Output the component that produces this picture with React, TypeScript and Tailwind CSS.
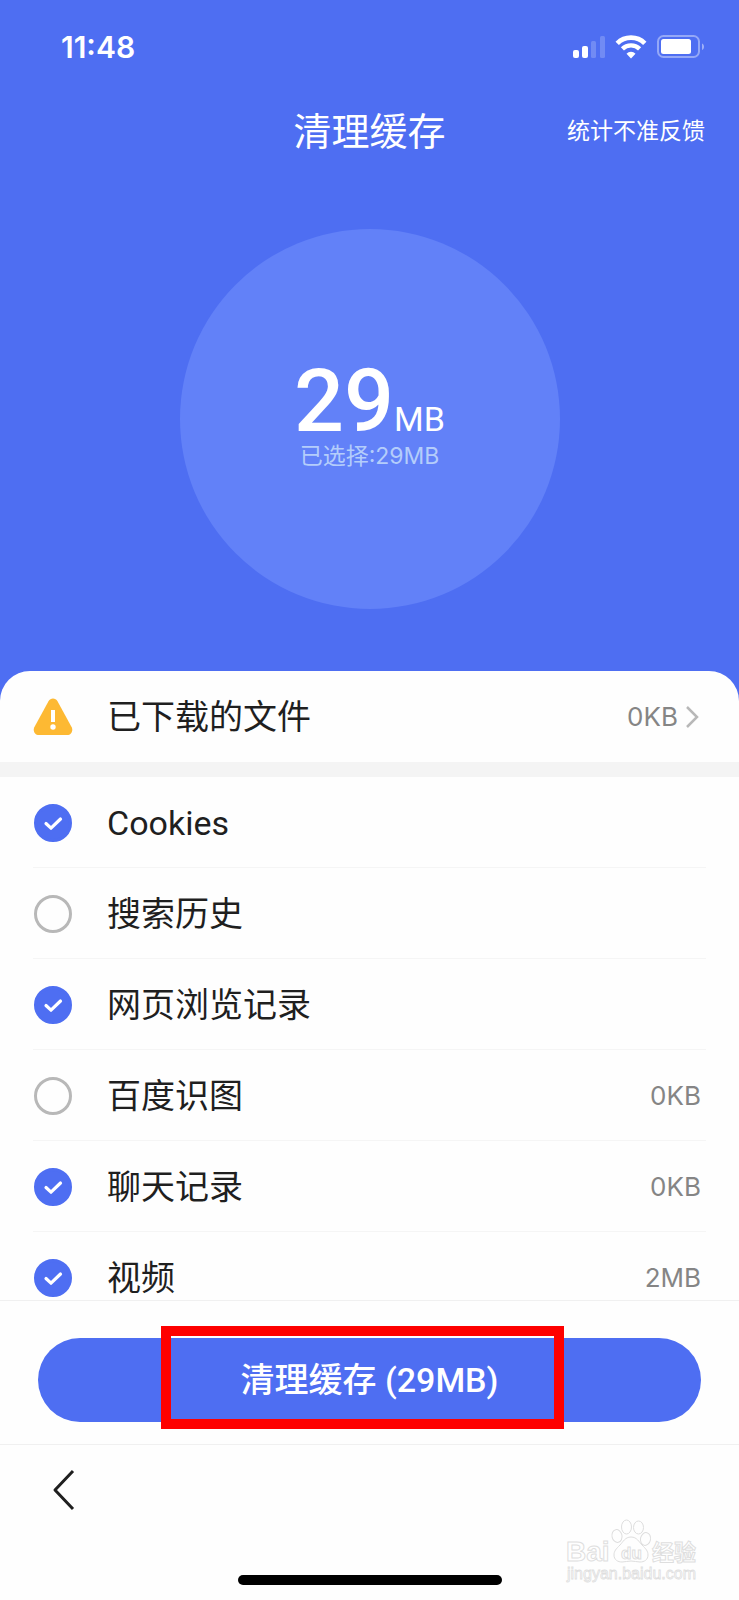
import { useState } from "react";

const initialItems = [
  { id: "cookies", label: "Cookies", size: "", checked: true },
  { id: "search", label: "搜索历史", size: "", checked: false },
  { id: "browse", label: "网页浏览记录", size: "", checked: true },
  { id: "image", label: "百度识图", size: "0KB", checked: false },
  { id: "chat", label: "聊天记录", size: "0KB", checked: true },
  { id: "video", label: "视频", size: "2MB", checked: true },
];

function StatusBar() {
  return (
    <div className="flex h-[94px] items-center justify-between pl-[61px] pr-[34px]">
      <span className="text-[30px] font-semibold leading-8">11:48</span>
      <div className="flex items-center gap-[10px]">
        {/* Signal */}
        <svg width="34" height="24" viewBox="0 0 34 24" fill="#fff" aria-hidden="true">
          <rect x="2" y="15" width="6" height="8" rx="2" />
          <rect x="11" y="11" width="6" height="12" rx="2" />
          <rect x="20" y="6" width="5" height="17" rx="1.5" opacity=".2" />
          <rect x="29" y="1" width="5" height="22" rx="1.5" opacity=".2" />
        </svg>
        {/* Wi-Fi */}
        <svg width="32" height="24" viewBox="0 0 32 24" fill="none" stroke="#fff" aria-hidden="true">
          <path d="M2.2 8.4a19.6 19.6 0 0 1 27.6 0" strokeWidth="4.8" />
          <path d="M7.4 13.9a12.2 12.2 0 0 1 17.2 0" strokeWidth="4.4" />
          <path d="M16 23.5l-4.5-4.7a6.2 6.2 0 0 1 9 0z" fill="#fff" stroke="none" />
        </svg>
        {/* Battery */}
        <svg width="48" height="24" viewBox="0 0 48 24" aria-hidden="true">
          <rect x="1" y="1" width="41" height="21" rx="5.5" fill="none" stroke="#fff" strokeWidth="2" opacity=".4" />
          <rect x="4" y="4" width="30" height="15" rx="2.5" fill="#fff" />
          <path d="M45 8.5c2.7 1.2 2.7 5.3 0 6.5z" fill="#fff" opacity=".45" />
        </svg>
      </div>
    </div>
  );
}

function Watermark() {
  return (
    <svg
      className="pointer-events-none absolute bottom-[12px] right-[30px]"
      width="144"
      height="70"
      viewBox="0 0 144 70"
      fill="#fefefe"
      stroke="#dedede"
      strokeWidth="1"
      aria-hidden="true"
    >
      <text x="1" y="43" fontFamily="Liberation Sans" fontWeight="700" fontSize="28">Bai</text>
      <ellipse cx="52" cy="18" rx="5" ry="6.5" transform="rotate(-12 52 18)" />
      <ellipse cx="61.5" cy="9" rx="5" ry="7" />
      <ellipse cx="73.5" cy="9.5" rx="5" ry="6.5" />
      <ellipse cx="80.5" cy="21" rx="5" ry="6.5" transform="rotate(12 80.5 21)" />
      <path d="M66 19c-6 0-8 5-11 8-4 4-6 6-6 10 0 5 4 7 8 7 3 0 6-1 9-1s6 1 9 1c4 0 8-2 8-7 0-4-2-6-6-10-3-3-5-8-11-8z" />
      <text x="56" y="41" fontFamily="Liberation Sans" fontWeight="700" fontSize="17">du</text>
      <text x="87" y="42" fontFamily="Noto Sans CJK SC" fontWeight="700" fontSize="22">经验</text>
      <text x="2" y="61" fontFamily="Liberation Sans" fontSize="16" strokeWidth=".8">jingyan.baidu.com</text>
    </svg>
  );
}

export default function App() {
  const [items, setItems] = useState(initialItems);

  const toggle = (id: string) =>
    setItems(items.map((item) => (item.id === id ? { ...item, checked: !item.checked } : item)));

  return (
    <div className="flex h-screen flex-col bg-[#4e6ef2] font-['Inter','Noto_Sans_CJK_SC',sans-serif] text-[#1f1f1f]">
      <header className="shrink-0 text-white">
        <StatusBar />
        <div className="grid h-[74px] grid-cols-[1fr_auto_1fr] items-center px-[34px]">
          <h1 className="col-start-2 text-[38px] leading-[48px]">清理缓存</h1>
          <a href="#feedback" className="justify-self-end text-[23px] leading-8">统计不准反馈</a>
        </div>
        <div className="flex justify-center pb-[62px] pt-[61px]">
          <div className="flex size-[380px] flex-col items-center justify-center rounded-full bg-[#6281f8] pt-[6px]">
            <div className="flex items-baseline font-['Roboto',sans-serif]">
              <span className="text-[88px] font-medium leading-[58px]">29</span>
              <span className="text-[34px] leading-[42px]">MB</span>
            </div>
            <p className="text-[23px] leading-8 text-[#b4cdfb]">已选择:29MB</p>
          </div>
        </div>
      </header>

      <main className="flex min-h-0 flex-1 flex-col rounded-t-[30px] bg-[#fefefe]">
        <a href="#downloads" className="flex h-[91px] shrink-0 items-center pl-[32px] pr-[40px]">
          <svg width="42" height="38" viewBox="0 0 42 38" aria-hidden="true">
            <path d="M16.5 3.2c2-3.6 7-3.6 9 0l14.2 26c1.7 3.4-.5 7.8-4.6 7.8H6.9c-4.1 0-6.3-4.4-4.6-7.8z" fill="#fdb933" />
            <rect x="19" y="12" width="4" height="12" fill="#fff" />
            <circle cx="21" cy="29" r="2.7" fill="#fff" />
          </svg>
          <span className="ml-[33px] flex-1 text-[34px] leading-[44px]">已下载的文件</span>
          <span className="text-[26px] leading-8 text-[#858585]">0KB</span>
          <svg className="ml-[7px]" width="14" height="24" viewBox="0 0 14 24" fill="none" stroke="#b8b8b8" strokeWidth="2.5" aria-hidden="true">
            <path d="M2 2l10 10L2 22" />
          </svg>
        </a>
        <div className="h-[15px] shrink-0 bg-[#f4f4f4]" />

        <ul className="min-h-0 flex-1 overflow-y-auto px-[33px] [scrollbar-width:none]">
          {items.map((item) => (
            <li key={item.id} className="border-b border-[#f5f5f5]">
              <label htmlFor={item.id} className="flex h-[90px] items-center pl-[1px] pr-[5px] pt-[2px]">
                <span className="grid place-items-center">
                  <input
                    id={item.id}
                    type="checkbox"
                    checked={item.checked}
                    onChange={() => toggle(item.id)}
                    className="col-start-1 row-start-1 size-[38px] appearance-none rounded-full border-3 border-[#b8b8b8] checked:border-[#4e6ef2] checked:bg-[#4e6ef2]"
                  />
                  {item.checked && (
                    <svg className="pointer-events-none col-start-1 row-start-1" width="20" height="16" viewBox="0 0 20 16" fill="none" stroke="#fff" strokeWidth="3.2" strokeLinecap="round" strokeLinejoin="round" aria-hidden="true">
                      <path d="M3 8.5l5 4.7L17.5 4" />
                    </svg>
                  )}
                </span>
                <span className="ml-[35px] flex-1 font-['Roboto','Noto_Sans_CJK_SC',sans-serif] text-[34px] leading-[44px]">{item.label}</span>
                <span className="text-[26px] leading-8 text-[#858585]">{item.size}</span>
              </label>
            </li>
          ))}
        </ul>
      </main>

      <div className="relative shrink-0 border-t border-[#f0f0f0] bg-[#fefefe] px-[38px] pb-[22px] pt-[37px]">
        <button type="button" className="h-[84px] w-full rounded-full bg-[#4e6ef2] font-['Roboto','Noto_Sans_CJK_SC',sans-serif] text-[34px] font-medium leading-[44px] text-white">
          清理缓存 (29MB)
        </button>
        <div className="pointer-events-none absolute bottom-[15px] left-[161px] right-[175px] top-[25px] border-10 border-[#fe0000]" />
      </div>

      <nav className="relative flex shrink-0 flex-col border-t border-[#f0f0f0] bg-[#fefefe] px-[38px] pb-[15px]">
        <button type="button" aria-label="返回" className="flex h-[90px] w-[52px] items-center justify-center">
          <svg width="24" height="42" viewBox="0 0 24 42" fill="none" stroke="#1f1f1f" strokeWidth="3" strokeLinejoin="round" aria-hidden="true">
            <path d="M21 2L3 21l18 19" />
          </svg>
        </button>
        <div className="mt-[40px] h-[10px] w-[264px] self-center rounded-full bg-black" />
        <Watermark />
      </nav>
    </div>
  );
}
